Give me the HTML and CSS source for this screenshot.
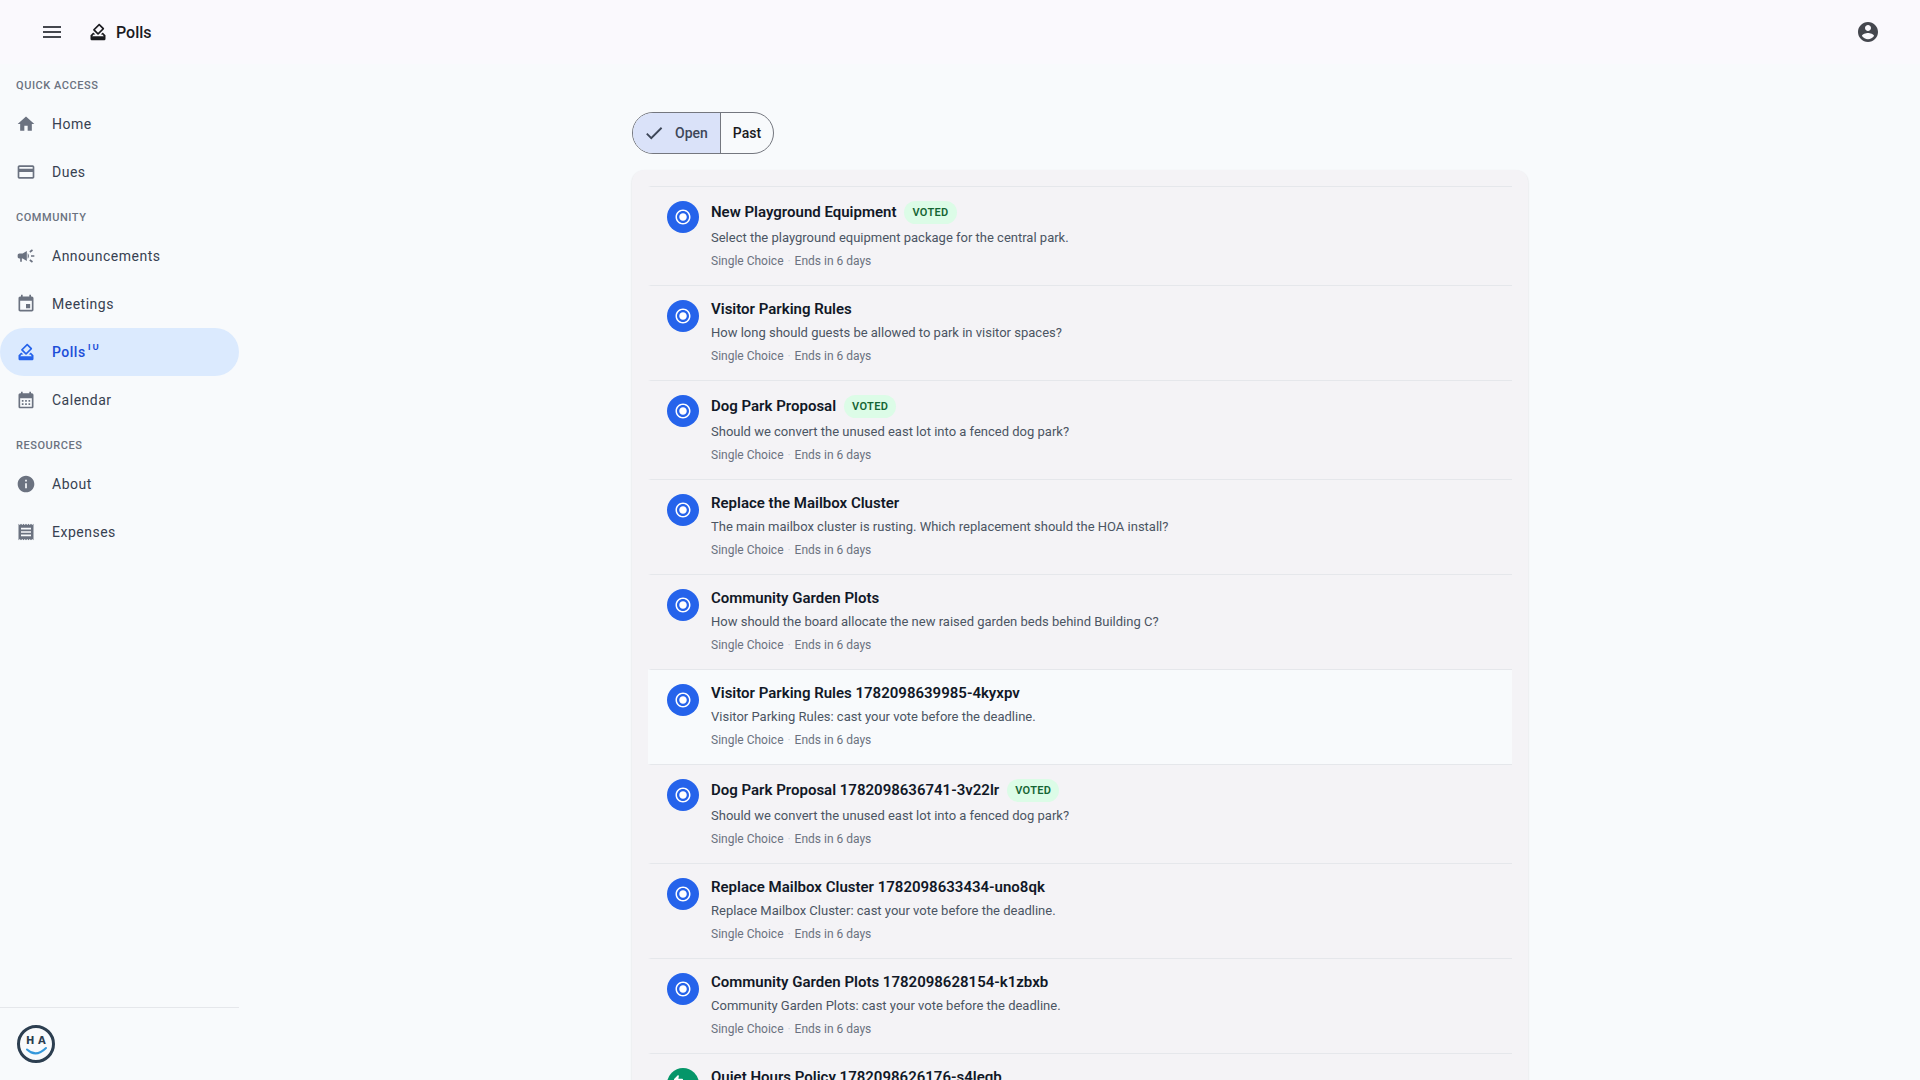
FILE: index.html
```html
<!DOCTYPE html>
<html lang="en">
<head>
    <title>Polls</title>
    <meta charset="UTF-8">
    <meta name="viewport" content="width=device-width, initial-scale=1.0">
    <link rel="stylesheet" href="styles.css">
</head>
<body>
    <!-- Shared icons -->
    <svg class="icon-defs" aria-hidden="true">
        <symbol id="icon-menu" viewBox="0 0 24 24"><path d="M3 18h18v-2H3v2zm0-5h18v-2H3v2zm0-7v2h18V6H3z"/></symbol>
        <symbol id="icon-vote" viewBox="0 0 24 24"><path d="M18 13h-.68l-2 2h1.91L19 17H5l1.78-2h2.05l-2-2H6l-3 3v4c0 1.1.89 2 1.99 2H19c1.1 0 2-.89 2-2v-4l-3-3zm-1-5.05l-4.95 4.95-3.54-3.54 4.95-4.95L17 7.95zm-4.24-5.66L6.39 8.66c-.39.39-.39 1.02 0 1.41l4.95 4.95c.39.39 1.02.39 1.41 0l6.36-6.36c.39-.39.39-1.02 0-1.41L14.16 2.3c-.38-.4-1.01-.4-1.4-.01z"/></symbol>
        <symbol id="icon-account" viewBox="0 0 24 24"><path d="M12 2C6.48 2 2 6.48 2 12s4.48 10 10 10 10-4.48 10-10S17.52 2 12 2zm0 3c1.66 0 3 1.34 3 3s-1.34 3-3 3-3-1.34-3-3 1.34-3 3-3zm0 14.2c-2.5 0-4.71-1.28-6-3.22.03-1.99 4-3.08 6-3.08 1.99 0 5.97 1.09 6 3.08-1.29 1.94-3.5 3.22-6 3.22z"/></symbol>
        <symbol id="icon-home" viewBox="0 0 24 24"><path d="M10 20v-6h4v6h5v-8h3L12 3 2 12h3v8z"/></symbol>
        <symbol id="icon-card" viewBox="0 0 24 24"><path d="M20 4H4c-1.11 0-1.99.89-1.99 2L2 18c0 1.11.89 2 2 2h16c1.11 0 2-.89 2-2V6c0-1.11-.89-2-2-2zm0 14H4v-6h16v6zm0-10H4V6h16v2z"/></symbol>
        <symbol id="icon-campaign" viewBox="0 0 24 24"><path d="M18 11v2h4v-2h-4zm-2 6.61c.96.71 2.21 1.65 3.2 2.39.4-.53.8-1.07 1.2-1.6-.99-.74-2.24-1.68-3.2-2.4-.4.54-.8 1.08-1.2 1.61zM20.4 5.6c-.4-.53-.8-1.07-1.2-1.6-.99.74-2.24 1.68-3.2 2.4.4.53.8 1.07 1.2 1.6.96-.72 2.21-1.65 3.2-2.4zM4 9c-1.1 0-2 .9-2 2v2c0 1.1.9 2 2 2h1v4h2v-4h1l5 3V6L8 9H4zm11.5 3c0-1.33-.58-2.53-1.5-3.35v6.69c.92-.81 1.5-2.01 1.5-3.34z"/></symbol>
        <symbol id="icon-event" viewBox="0 0 24 24"><path d="M17 12h-5v5h5v-5zM16 1v2H8V1H6v2H5c-1.11 0-1.99.9-1.99 2L3 19c0 1.1.89 2 2 2h14c1.1 0 2-.9 2-2V5c0-1.1-.9-2-2-2h-1V1h-2zm3 18H5V8h14v11z"/></symbol>
        <symbol id="icon-calendar" viewBox="0 0 24 24"><path d="M19 4h-1V2h-2v2H8V2H6v2H5c-1.11 0-1.99.9-1.99 2L3 20c0 1.1.89 2 2 2h14c1.1 0 2-.9 2-2V6c0-1.1-.9-2-2-2zm0 16H5V10h14v10zM9 14H7v-2h2v2zm4 0h-2v-2h2v2zm4 0h-2v-2h2v2zm-8 4H7v-2h2v2zm4 0h-2v-2h2v2zm4 0h-2v-2h2v2z"/></symbol>
        <symbol id="icon-info" viewBox="0 0 24 24"><path d="M12 2C6.48 2 2 6.48 2 12s4.48 10 10 10 10-4.48 10-10S17.52 2 12 2zm1 15h-2v-6h2v6zm0-8h-2V7h2v2z"/></symbol>
        <symbol id="icon-receipt" viewBox="0 0 24 24"><path d="M18 17H6v-2h12v2zm0-4H6v-2h12v2zm0-4H6V7h12v2zM3 22l1.5-1.5L6 22l1.5-1.5L9 22l1.5-1.5L12 22l1.5-1.5L15 22l1.5-1.5L18 22l1.5-1.5L21 22V2l-1.5 1.5L18 2l-1.5 1.5L15 2l-1.5 1.5L12 2l-1.5 1.5L9 2 7.5 3.5 6 2 4.5 3.5 3 2v20z"/></symbol>
        <symbol id="icon-check" viewBox="0 0 24 24"><path d="M9 16.17L4.83 12l-1.42 1.41L9 19 21 7l-1.41-1.41z"/></symbol>
        <symbol id="icon-radio" viewBox="0 0 24 24"><path d="M12 7c-2.76 0-5 2.24-5 5s2.24 5 5 5 5-2.24 5-5-2.24-5-5-5zm0-5C6.48 2 2 6.48 2 12s4.48 10 10 10 10-4.48 10-10S17.52 2 12 2zm0 18c-4.42 0-8-3.58-8-8s3.58-8 8-8 8 3.58 8 8-3.58 8-8 8z"/></symbol>
        <symbol id="icon-thumbs" viewBox="0 0 24 24"><path d="M12 6c0-.55-.45-1-1-1H5.82l.66-3.18.02-.23c0-.31-.13-.59-.33-.8L5.38 0 .44 4.94C.17 5.21 0 5.59 0 6v6.5c0 .83.67 1.5 1.5 1.5h6.75c.62 0 1.15-.38 1.38-.91l2.26-5.29c.07-.17.11-.36.11-.55V6zm10.5 4h-6.75c-.62 0-1.15.38-1.38.91l-2.26 5.29c-.07.17-.11.36-.11.55V18c0 .55.45 1 1 1h5.18l-.66 3.18-.02.24c0 .31.13.59.33.8l.79.78 4.94-4.94c.27-.27.44-.65.44-1.06v-6.5c0-.83-.67-1.5-1.5-1.5z"/></symbol>
    </svg>

    <header class="toolbar">
        <button class="icon-button" aria-label="Toggle menu"><svg class="icon"><use href="#icon-menu"/></svg></button>
        <h1 class="page-title"><svg class="icon-sm"><use href="#icon-vote"/></svg>Polls</h1>
        <button class="icon-button account" aria-label="Account"><svg class="icon"><use href="#icon-account"/></svg></button>
    </header>

    <div class="layout">
        <aside class="sidebar">
            <nav>
                <h2 class="nav-heading">Quick Access</h2>
                <a href="#" class="nav-item"><svg class="icon-sm"><use href="#icon-home"/></svg>Home</a>
                <a href="#" class="nav-item"><svg class="icon-sm"><use href="#icon-card"/></svg>Dues</a>
                <h2 class="nav-heading">Community</h2>
                <a href="#" class="nav-item"><svg class="icon-sm"><use href="#icon-campaign"/></svg>Announcements</a>
                <a href="#" class="nav-item"><svg class="icon-sm"><use href="#icon-event"/></svg>Meetings</a>
                <a href="#" class="nav-item active"><svg class="icon-sm"><use href="#icon-vote"/></svg><span class="nav-label">Polls<span class="badge">10</span></span></a>
                <a href="#" class="nav-item"><svg class="icon-sm"><use href="#icon-calendar"/></svg>Calendar</a>
                <h2 class="nav-heading">Resources</h2>
                <a href="#" class="nav-item"><svg class="icon-sm"><use href="#icon-info"/></svg>About</a>
                <a href="#" class="nav-item"><svg class="icon-sm"><use href="#icon-receipt"/></svg>Expenses</a>
            </nav>
            <footer class="sidebar-footer">
                <svg class="logo" viewBox="0 0 40 40" role="img" aria-label="HA">
                    <circle cx="20" cy="20" r="17.5" fill="none" stroke="#2c3e50" stroke-width="3"/>
                    <text x="10" y="20" class="logo-text">H</text>
                    <text x="22" y="20" class="logo-text">A</text>
                    <path d="M11 25.5Q20 34 30 24" fill="none" stroke="#3498db" stroke-width="2" stroke-linecap="round"/>
                </svg>
            </footer>
        </aside>

        <main class="content">
            <div class="toggle-group">
                <button class="toggle selected" aria-pressed="true"><svg class="icon-check"><use href="#icon-check"/></svg>Open</button>
                <button class="toggle" aria-pressed="false">Past</button>
            </div>

            <section class="card">
                <a href="#" class="poll">
                    <span class="poll-icon"><svg><use href="#icon-radio"/></svg></span>
                    <div class="poll-body">
                        <div class="poll-head"><h3>New Playground Equipment</h3><span class="chip">Voted</span></div>
                        <p class="poll-desc">Select the playground equipment package for the central park.</p>
                        <p class="poll-meta">Single Choice <span class="dot">·</span> Ends in 6 days</p>
                    </div>
                </a>
                <a href="#" class="poll">
                    <span class="poll-icon"><svg><use href="#icon-radio"/></svg></span>
                    <div class="poll-body">
                        <div class="poll-head"><h3>Visitor Parking Rules</h3></div>
                        <p class="poll-desc">How long should guests be allowed to park in visitor spaces?</p>
                        <p class="poll-meta">Single Choice <span class="dot">·</span> Ends in 6 days</p>
                    </div>
                </a>
                <a href="#" class="poll">
                    <span class="poll-icon"><svg><use href="#icon-radio"/></svg></span>
                    <div class="poll-body">
                        <div class="poll-head"><h3>Dog Park Proposal</h3><span class="chip">Voted</span></div>
                        <p class="poll-desc">Should we convert the unused east lot into a fenced dog park?</p>
                        <p class="poll-meta">Single Choice <span class="dot">·</span> Ends in 6 days</p>
                    </div>
                </a>
                <a href="#" class="poll">
                    <span class="poll-icon"><svg><use href="#icon-radio"/></svg></span>
                    <div class="poll-body">
                        <div class="poll-head"><h3>Replace the Mailbox Cluster</h3></div>
                        <p class="poll-desc">The main mailbox cluster is rusting. Which replacement should the HOA install?</p>
                        <p class="poll-meta">Single Choice <span class="dot">·</span> Ends in 6 days</p>
                    </div>
                </a>
                <a href="#" class="poll">
                    <span class="poll-icon"><svg><use href="#icon-radio"/></svg></span>
                    <div class="poll-body">
                        <div class="poll-head"><h3>Community Garden Plots</h3></div>
                        <p class="poll-desc">How should the board allocate the new raised garden beds behind Building C?</p>
                        <p class="poll-meta">Single Choice <span class="dot">·</span> Ends in 6 days</p>
                    </div>
                </a>
                <a href="#" class="poll hovered">
                    <span class="poll-icon"><svg><use href="#icon-radio"/></svg></span>
                    <div class="poll-body">
                        <div class="poll-head"><h3>Visitor Parking Rules 1782098639985-4kyxpv</h3></div>
                        <p class="poll-desc">Visitor Parking Rules: cast your vote before the deadline.</p>
                        <p class="poll-meta">Single Choice <span class="dot">·</span> Ends in 6 days</p>
                    </div>
                </a>
                <a href="#" class="poll">
                    <span class="poll-icon"><svg><use href="#icon-radio"/></svg></span>
                    <div class="poll-body">
                        <div class="poll-head"><h3>Dog Park Proposal 1782098636741-3v22lr</h3><span class="chip">Voted</span></div>
                        <p class="poll-desc">Should we convert the unused east lot into a fenced dog park?</p>
                        <p class="poll-meta">Single Choice <span class="dot">·</span> Ends in 6 days</p>
                    </div>
                </a>
                <a href="#" class="poll">
                    <span class="poll-icon"><svg><use href="#icon-radio"/></svg></span>
                    <div class="poll-body">
                        <div class="poll-head"><h3>Replace Mailbox Cluster 1782098633434-uno8qk</h3></div>
                        <p class="poll-desc">Replace Mailbox Cluster: cast your vote before the deadline.</p>
                        <p class="poll-meta">Single Choice <span class="dot">·</span> Ends in 6 days</p>
                    </div>
                </a>
                <a href="#" class="poll">
                    <span class="poll-icon"><svg><use href="#icon-radio"/></svg></span>
                    <div class="poll-body">
                        <div class="poll-head"><h3>Community Garden Plots 1782098628154-k1zbxb</h3></div>
                        <p class="poll-desc">Community Garden Plots: cast your vote before the deadline.</p>
                        <p class="poll-meta">Single Choice <span class="dot">·</span> Ends in 6 days</p>
                    </div>
                </a>
                <a href="#" class="poll">
                    <span class="poll-icon yes-no"><svg><use href="#icon-thumbs"/></svg></span>
                    <div class="poll-body">
                        <div class="poll-head"><h3>Quiet Hours Policy 1782098626176-s4legb</h3></div>
                    </div>
                </a>
            </section>
        </main>
    </div>
</body>
</html>
```

FILE: styles.css
```css
/* Polls page */
:root {
    --bg: #f8fafc;
    --toolbar-bg: #faf9fd;
    --card-bg: #f4f3f6;
    --line: #e5e7eb;
    --blue: #2563eb;
    --text-dark: #111827;
    --text-mid: #4b5563;
    --text-muted: #6b7280;
}

* { margin: 0; padding: 0; box-sizing: border-box; }

body {
    height: 100vh;
    display: flex;
    flex-direction: column;
    overflow: hidden;
    font-family: Roboto, "Liberation Sans", sans-serif;
    background: var(--bg);
    color: var(--text-dark);
}

svg { fill: currentColor; flex-shrink: 0; }

a { color: inherit; text-decoration: none; }

.icon-defs { position: absolute; width: 0; height: 0; }
.icon { width: 24px; height: 24px; }
.icon-sm { width: 20px; height: 20px; }

/* Toolbar */
.toolbar {
    height: 64px;
    flex-shrink: 0;
    display: flex;
    align-items: center;
    padding: 0 28px;
    background: var(--toolbar-bg);
}

.icon-button {
    width: 48px;
    height: 48px;
    padding: 12px;
    border: none;
    background: none;
    color: #44474e;
    cursor: pointer;
}

.account { margin-left: auto; }

.page-title {
    display: flex;
    align-items: center;
    gap: 8px;
    margin-left: 12px;
    font-size: 16px;
    font-weight: 500;
    color: #1a1b1f;
}

.layout {
    flex: 1;
    min-height: 0;
    display: flex;
}

/* Sidebar */
.sidebar {
    width: 240px;
    flex-shrink: 0;
    display: flex;
    flex-direction: column;
    justify-content: space-between;
    padding-right: 1px;
}

.nav-heading {
    padding: 13px 16px 5px;
    font-size: 11px;
    line-height: 18px;
    font-weight: 500;
    letter-spacing: 0.05em;
    text-transform: uppercase;
    color: var(--text-muted);
}

.nav-item {
    height: 48px;
    display: flex;
    align-items: center;
    gap: 16px;
    padding: 0 16px;
    border-radius: 24px;
    font-size: 14px;
    letter-spacing: 0.5px;
    color: #374151;
}

.nav-item svg { color: var(--text-muted); }

.nav-item.active {
    background: #dbeafe;
    color: #1d4ed8;
    font-weight: 500;
}

.nav-item.active svg { color: var(--blue); }

/* the count is cut off by the label's box */
.nav-label {
    display: flex;
    height: 16px;
    line-height: 16px;
    overflow: hidden;
}

.badge {
    margin-top: -5px;
    font-size: 11px;
}

.sidebar-footer {
    height: 73px;
    padding: 16px;
    border-top: 1px solid var(--line);
}

.logo { width: 40px; height: 40px; }

.logo-text {
    font-family: "DejaVu Sans", sans-serif;
    font-size: 10px;
    font-weight: 700;
    fill: #2c3e50;
}

/* Content */
.content {
    flex: 1;
    min-width: 0;
    max-width: 896px;
    margin: 0 auto;
    padding-top: 48px;
}

.toggle-group {
    display: inline-flex;
    height: 42px;
    border: 1px solid #74777f;
    border-radius: 21px;
    overflow: hidden;
}

.toggle {
    display: flex;
    align-items: center;
    gap: 10px;
    padding: 0 12px;
    border: none;
    background: none;
    font: 500 14px Roboto, sans-serif;
    color: #1a1b1f;
    cursor: pointer;
}

.toggle + .toggle { border-left: 1px solid #74777f; }

.toggle.selected {
    padding-left: 10px;
    background: #dae2f9;
    color: #3e4759;
}

.icon-check { width: 22px; height: 22px; }

.card {
    margin-top: 16px;
    padding: 16px;
    border-radius: 12px;
    background: var(--card-bg);
    box-shadow: 0 1px 2px rgba(0,0,0,0.15);
}

.poll {
    display: flex;
    gap: 12px;
    padding: 14px 16px;
    border-top: 1px solid var(--line);
    border-left: 3px solid transparent;
}

.poll.hovered { background: var(--bg); }

.poll-icon {
    width: 32px;
    height: 32px;
    flex-shrink: 0;
    display: flex;
    align-items: center;
    justify-content: center;
    border-radius: 50%;
    background: var(--blue);
    color: white;
}

.poll-icon svg { width: 18px; height: 18px; }

.poll-icon.yes-no { background: #059669; }

.poll-head {
    display: flex;
    align-items: center;
    gap: 8px;
}

.poll-head h3 {
    font-size: 15px;
    line-height: 19px;
    font-weight: 600;
}

.chip {
    padding: 0 8px;
    border-radius: 12px;
    background: #dcfce7;
    color: #166534;
    font-size: 11px;
    line-height: 23px;
    font-weight: 600;
    letter-spacing: 0.03em;
    text-transform: uppercase;
}

.poll-desc {
    margin-top: 4px;
    font-size: 13px;
    line-height: 20px;
    color: var(--text-mid);
}

.poll-meta {
    margin-top: 4px;
    font-size: 12px;
    line-height: 19px;
    color: var(--text-muted);
}

.dot {
    margin: 0 1px;
    color: #cbd5e1;
}
```
